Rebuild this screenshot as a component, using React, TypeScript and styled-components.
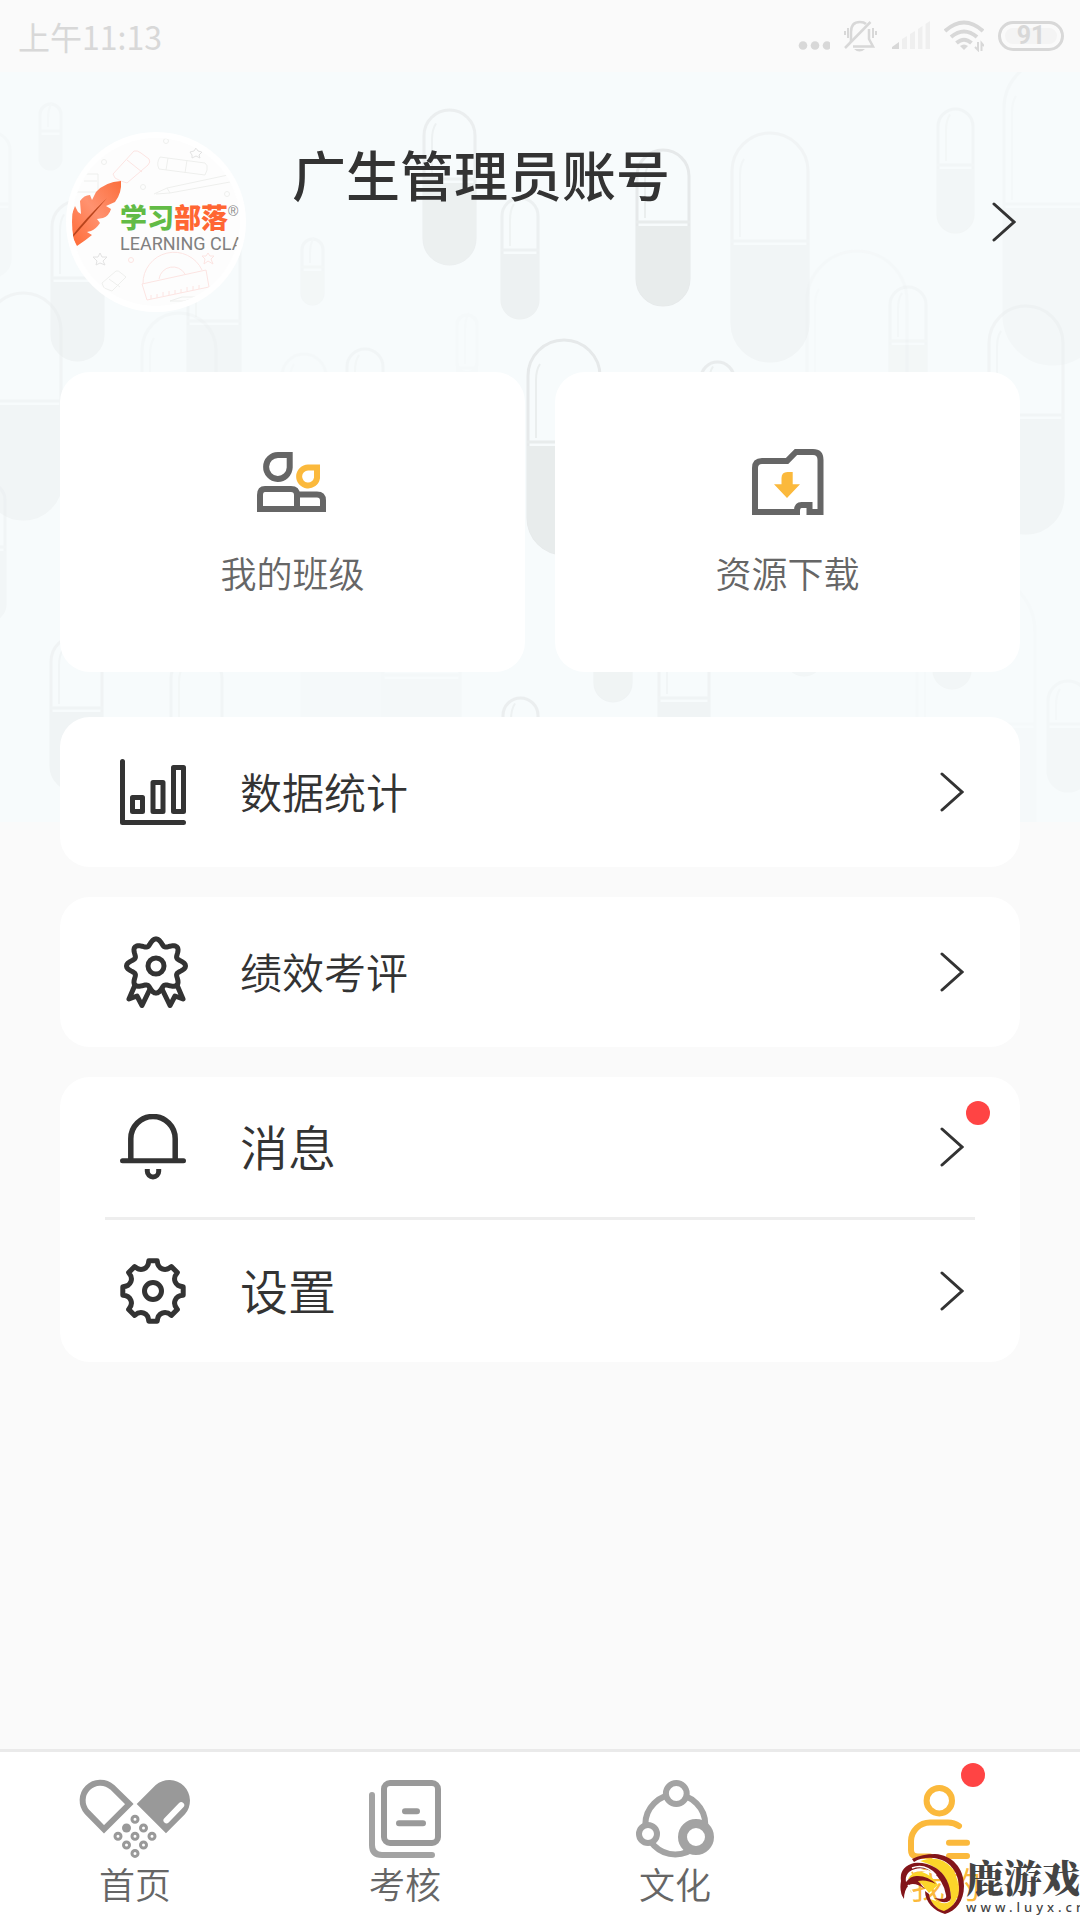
import React from "react";
import styled, { createGlobalStyle } from "styled-components";

const GlobalStyle = createGlobalStyle`
  * { box-sizing: border-box; }
  body {
    margin: 0;
    background: #fafafa;
    color: #333;
    font-family: "Noto Sans CJK SC", sans-serif;
    font-weight: 350;
  }
  button, a { font: inherit; color: inherit; text-decoration: none; }
`;

const Screen = styled.div`
  position: relative;
  display: flex;
  flex-direction: column;
  min-height: 100vh;
  overflow: hidden;
`;

const StatusBar = styled.header`
  display: flex;
  align-items: center;
  justify-content: space-between;
  height: 72px;
  padding: 0 16px 0 18px;
  color: #d8d8d8;
`;

const Clock = styled.time`
  font-size: 32px;
  font-weight: 400;
  line-height: 72px;
`;

const StatusIcons = styled.div`
  display: flex;
  align-items: center;
  gap: 14px;
`;

const Battery = styled.span`
  display: flex;
  align-items: center;
  justify-content: center;
  width: 66px;
  height: 30px;
  border: 3px solid #d8d8d8;
  border-radius: 15px;
  background: #f4f4f4;
  box-shadow: inset 0 0 0 4px #fafafa;
  font-family: Roboto, sans-serif;
  font-size: 25px;
  font-weight: 700;
  line-height: 24px;
`;

const Main = styled.main`
  position: relative;
  flex: 1;
`;

const Backdrop = styled.svg`
  position: absolute;
  top: 0;
  left: 0;
  z-index: -1;
  display: block;
  width: 100%;
  height: auto;
`;

const Profile = styled.a`
  display: flex;
  align-items: center;
  padding: 60px 64px 60px 66px;
`;

const Avatar = styled.span`
  position: relative;
  flex: none;
  display: flex;
  flex-direction: column;
  width: 180px;
  height: 180px;
  padding: 66px 0 0 48px;
  border: 6px solid #fff;
  border-radius: 50%;
  background: #fdfdfd;
  overflow: hidden;
  white-space: nowrap;
`;

const AvatarArt = styled.svg`
  position: absolute;
  top: 0;
  left: 0;
`;

const Brand = styled.span<{ $color: string }>`
  color: ${(p) => p.$color};
`;

const BrandRow = styled.span`
  position: relative;
  display: flex;
  font-size: 27px;
  font-weight: 900;
  line-height: 26px;
`;

const Registered = styled.span`
  color: #888;
  font-family: "Liberation Sans", sans-serif;
  font-size: 14px;
  font-weight: 400;
  line-height: 14px;
`;

const BrandLatin = styled.span`
  position: relative;
  color: #808080;
  font-family: Roboto, sans-serif;
  font-size: 18px;
  font-weight: 400;
  line-height: 28px;
`;

const Name = styled.h1`
  flex: 1;
  align-self: flex-start;
  margin: 0 0 0 46px;
  font-size: 54px;
  font-weight: 500;
  line-height: 84px;
`;

const Content = styled.div`
  display: flex;
  flex-direction: column;
  gap: 30px;
  padding: 0 60px 60px;
`;

const Tiles = styled.div`
  display: grid;
  grid-template-columns: 1fr 1fr;
  gap: 30px;
  margin-bottom: 15px;
`;

const Tile = styled.button`
  display: flex;
  flex-direction: column;
  align-items: center;
  gap: 32px;
  padding: 77px 0 75px;
  border: 0;
  border-radius: 30px;
  background: #fff;
  color: #666;
  font-size: 36px;
  line-height: 50px;
`;

const Panel = styled.section`
  border-radius: 30px;
  background: #fff;
`;

const Row = styled.button<{ $height: number; $size: number }>`
  position: relative;
  display: flex;
  align-items: center;
  gap: 54px;
  width: 100%;
  height: ${(p) => p.$height}px;
  padding: 0 56px 0 60px;
  border: 0;
  background: none;
  font-size: ${(p) => p.$size}px;
  text-align: left;
`;

const RowLabel = styled.span`
  flex: 1;
  padding-bottom: 4px;
`;

const Divider = styled.hr`
  height: 3px;
  margin: 0 45px;
  border: 0;
  background: #eee;
`;

const Dot = styled.span<{ $top: number; $right: string }>`
  position: absolute;
  top: ${(p) => p.$top}px;
  right: ${(p) => p.$right};
  width: 24px;
  height: 24px;
  border-radius: 50%;
  background: #ff4444;
`;

const TabBar = styled.nav`
  display: grid;
  grid-template-columns: repeat(4, 1fr);
  border-top: 3px solid #eaeaea;
  background: #fff;
`;

const Tab = styled.a<{ $active?: boolean }>`
  position: relative;
  display: flex;
  flex-direction: column;
  align-items: center;
  padding: 27px 0 13px;
  color: ${(p) => (p.$active ? "#fbb93c" : "#666")};
  font-size: 36px;
  line-height: 48px;
`;

const Watermark = styled.aside`
  position: absolute;
  right: 0;
  bottom: 4px;
  display: flex;
  align-items: flex-start;
  width: 180px;
  white-space: nowrap;

  svg { flex: none; }
`;

const WatermarkText = styled.div`
  display: flex;
  flex-direction: column;
  color: #444;
`;

const WatermarkName = styled.span`
  font-family: "Noto Serif CJK SC", "Noto Sans CJK SC", serif;
  font-size: 38px;
  font-weight: 900;
  line-height: 44px;
`;

const WatermarkUrl = styled.span`
  font-family: "Noto Sans", sans-serif;
  font-size: 13px;
  font-weight: 500;
  letter-spacing: 4px;
  line-height: 18px;
`;

/* x, y, width, height, seam, opacity */
type PillSpec = [number, number, number, number, number, number];

const pills: PillSpec[] = [
  [39, 31, 23, 67, 63, 0.2],
  [-25, 60, 36, 145, 136, 0.15],
  [423, 37, 53, 156, 111, 0.7],
  [501, 125, 38, 122, 182, 0.6],
  [636, 77, 54, 157, 154, 1],
  [731, 60, 78, 230, 173, 0.35],
  [937, 36, 37, 125, 97, 0.3],
  [1003, -14, 100, 307, 136, 0.2],
  [806, 178, 102, 320, 340, 0.12],
  [889, 214, 38, 140, 273, 0.25],
  [988, 233, 76, 229, 347, 0.35],
  [301, 166, 23, 67, 199, 0.25],
  [456, 242, 22, 60, 300, 0.1],
  [51, 128, 53, 161, 210, 0.4],
  [187, 140, 54, 200, 253, 0.3],
  [-15, 220, 77, 228, 333, 0.35],
  [141, 240, 76, 200, 355, 0.2],
  [527, 267, 74, 216, 374, 1],
  [700, 289, 35, 110, 350, 0.8],
  [346, 276, 38, 120, 340, 0.3],
  [281, 281, 46, 130, 350, 0.12],
  [-30, 410, 36, 140, 479, 0.3],
  [50, 563, 53, 157, 640, 0.4],
  [170, 580, 53, 150, 680, 0.3],
  [382, 520, 79, 230, 607, 0.15],
  [301, 540, 80, 220, 600, 0.08],
  [594, 508, 38, 122, 565, 0.45],
  [658, 555, 52, 157, 630, 0.4],
  [502, 625, 37, 120, 690, 0.7],
  [933, 500, 38, 117, 560, 0.3],
  [785, 490, 38, 114, 550, 0.3],
  [1047, 608, 42, 112, 656, 0.2],
  [916, 500, 120, 320, 656, 0.1],
];

const Pill = ({ spec }: { spec: PillSpec }) => {
  const [x, y, w, h, seam, opacity] = spec;
  const r = w / 2;
  return (
    <g opacity={opacity}>
      <rect x={x + 1} y={y + 1} width={w - 2} height={h - 2} rx={r - 1} fill="none" stroke="#e6e9ea" strokeWidth="3" />
      <path d={`M${x} ${seam}H${x + w}V${y + h - r}A${r} ${r} 0 0 1 ${x} ${y + h - r}Z`} fill="#e8ecec" />
      <path d={`M${x} ${seam - 4}H${x + w}`} stroke="#e8ecec" strokeWidth="3" />
      <path d={`M${x + 9} ${seam - 8}V${y + r + 4}Q${x + 9} ${y + r - 6} ${x + 13} ${y + r - 12}`} fill="none" stroke="#eaeeee" strokeWidth="2" />
    </g>
  );
};

const PillBackdrop = () => (
  <Backdrop viewBox="0 0 1080 750" aria-hidden="true">
    <rect width="1080" height="750" fill="#f7fbfc" />
    {pills.map((spec, i) => (
      <Pill key={i} spec={spec} />
    ))}
  </Backdrop>
);

const Chevron = () => (
  <svg width="24" height="40" viewBox="0 0 24 40" fill="none" stroke="#333" strokeWidth="3" strokeLinecap="round" aria-hidden="true">
    <path d="M2 2L22 20L2 38" />
  </svg>
);

const polar = (r: number, deg: number, cx: number, cy: number, squash = 1) => {
  const a = (deg * Math.PI) / 180;
  return `${(cx + r * Math.sin(a)).toFixed(2)} ${(cy - r * squash * Math.cos(a)).toFixed(2)}`;
};

const gearPath =
  "M" +
  [0, 45, 90, 135, 180, 225, 270, 315]
    .map(
      (a) =>
        `${polar(30.5, a - 8, 33, 33)}L${polar(30.5, a + 8, 33, 33)}C${polar(22.5, a + 12, 33, 33)} ${polar(22.5, a + 33, 33, 33)} `
    )
    .join("") +
  `${polar(30.5, -8, 33, 33)}Z`;

const rosettePath =
  "M" +
  Array.from({ length: 120 }, (_, i) => polar(26 + 3.5 * Math.cos((i * 24 * Math.PI) / 180), i * 3, 36, 30, 0.92)).join("L") +
  "Z";

const ChartIcon = () => (
  <svg width="66" height="66" viewBox="0 0 66 66" fill="none" stroke="#333" strokeWidth="5" strokeLinejoin="round" strokeLinecap="round" aria-hidden="true">
    <path d="M2.5 2.5V63.5H63.5" />
    <rect x="12.5" y="38.5" width="10" height="14" />
    <rect x="33" y="23.5" width="10" height="29" />
    <rect x="53.5" y="8.5" width="10" height="44" />
  </svg>
);

const MedalIcon = () => (
  <svg width="66" height="72" viewBox="0 0 66 72" overflow="visible" fill="none" stroke="#333" strokeWidth="5" strokeLinejoin="round" strokeLinecap="round" aria-hidden="true">
    <path d={rosettePath} />
    <circle cx="36" cy="30" r="8" />
    <path d="M15 49L9 63L17 60L22 69.500L30 53M57 49L63 63L55 60L50 69.500L42 53" />
  </svg>
);

const BellIcon = () => (
  <svg width="66" height="66" viewBox="0 0 66 66" fill="none" stroke="#333" strokeWidth="5" aria-hidden="true">
    <path d="M10.800 46V24.700A22.200 22.200 0 0 1 55.200 24.700V46" strokeWidth="5.500" />
    <path d="M2.500 46.700H63.500" strokeLinecap="round" />
    <path d="M27.300 55V57.300A5.700 5.700 0 0 0 38.700 57.300V55" />
  </svg>
);

const GearIcon = () => (
  <svg width="66" height="66" viewBox="0 0 66 66" fill="none" stroke="#333" strokeWidth="5" strokeLinejoin="round" aria-hidden="true">
    <path d={gearPath} />
    <circle cx="33" cy="33" r="8.500" />
  </svg>
);

const ClassIcon = () => (
  <svg width="72" height="66" viewBox="0 0 72 66" fill="none" stroke="#666" strokeWidth="6" aria-hidden="true">
    <path d="M32.700 6V18.500A11.800 12 0 1 1 21 6Z" />
    <path d="M60 18.500V29A9 9 0 1 1 51 18.500Z" stroke="#fbb93c" />
    <path d="M3 60V46Q3 40 8 40H34Q40 40 40 46V60Z" />
    <path d="M40 45.500H60Q66 45.500 66 51.500V60H40" />
  </svg>
);

const DownloadIcon = () => (
  <svg width="72" height="66" viewBox="0 0 72 66" fill="none" stroke="#666" strokeWidth="6" aria-hidden="true">
    <path d="M48 63H3V19Q3 12 10 12H35L44 3H61Q68.500 3 68.500 11V63H57.500V56H49.500Q45 56 45 62" />
    <path d="M29.500 35.300V29Q29.500 23 35.500 23H40.700V35.300H48L35 49L22 35.300Z" fill="#fbb93c" stroke="none" />
  </svg>
);

const HomeIcon = () => (
  <svg width="114" height="80" viewBox="0 0 114 80" fill="none" stroke="#999" aria-hidden="true">
    <path d="M51.300 25L34.200 8.200A17.700 17.700 0 0 0 9.200 33.200L26 50.300Z" strokeWidth="6" />
    <path d="M58.700 25L77.700 6.100A20.700 20.700 0 0 1 106.900 35.300L88 54.300Z" fill="#999" stroke="none" />
    <path d="M88.500 41.300L103.200 26.200" stroke="#fff" strokeWidth="6" strokeLinecap="round" />
    {[[57, 40.3], [65.5, 49], [40, 57.3], [57, 57.3], [74, 57.3], [48.5, 66], [65.5, 66], [57, 74.4]].map(([x, y]) => (
      <circle key={`${x}-${y}`} cx={x} cy={y} r="3" strokeWidth="3" />
    ))}
    <circle cx="48.500" cy="49" r="4.500" fill="#999" stroke="none" />
  </svg>
);

const ExamIcon = () => (
  <svg width="114" height="80" viewBox="0 0 114 80" fill="none" stroke="#999" strokeWidth="6" strokeLinecap="round" aria-hidden="true">
    <rect x="36" y="4" width="54" height="60" rx="6" />
    <path d="M24 16V66Q24 76 34 76H84" stroke="#a3a3a3" />
    <path d="M57 32.300H69M51 44.300H75" />
  </svg>
);

const CultureIcon = () => (
  <svg width="114" height="80" viewBox="0 0 114 80" stroke="#a3a3a3" strokeWidth="6" fill="#fff" aria-hidden="true">
    <circle cx="57.300" cy="45.500" r="30" />
    <circle cx="58.300" cy="14.500" r="10.400" />
    <circle cx="30" cy="55" r="9" />
    <circle cx="78" cy="58" r="13.500" strokeWidth="9" />
  </svg>
);

const MeIcon = () => (
  <svg width="114" height="80" viewBox="0 0 114 80" fill="none" stroke="#fbb93c" strokeWidth="6" strokeLinecap="round" aria-hidden="true">
    <circle cx="51.300" cy="21.700" r="12.700" />
    <path d="M71 47Q66 43.500 60 43.500H42A19 19 0 0 0 23 62V71Q23 77.500 30 77.500H42" />
    <path d="M61 63.700H79M61 77H79" />
  </svg>
);

const MoreIcon = () => (
  <svg width="34" height="32" viewBox="0 0 34 32" fill="#d8d8d8" aria-hidden="true">
    <circle cx="7" cy="25.500" r="4.300" />
    <circle cx="19" cy="25.500" r="4.300" />
    <circle cx="31" cy="25.500" r="4.300" />
  </svg>
);

const SilentIcon = () => (
  <svg width="34" height="32" viewBox="0 0 34 32" fill="none" stroke="#d8d8d8" strokeWidth="2.500" aria-hidden="true">
    <path d="M7 22V12Q7 2 16 2Q20 2 22 4M25 9V19L29 26.500H9" />
    <path d="M1 28L26.500 2" />
    <path d="M10 29H21Q15.500 34 10 29Z" fill="#d8d8d8" stroke="none" />
    <path d="M1 11V15M4 8V18M29 8V18M32 11V15" strokeWidth="2" />
  </svg>
);

const SignalIcon = () => (
  <svg width="38" height="32" viewBox="0 0 38 32" fill="#efefef" aria-hidden="true">
    <path d="M0 29V27L7 22V29Z" fill="#d8d8d8" />
    <path d="M10 29V19L15 16V29ZM18 29V14L23 11V29ZM26 29V9L30.500 6V29ZM33.500 29V4L38 1V29Z" />
  </svg>
);

const WifiIcon = () => (
  <svg width="40" height="32" viewBox="0 0 40 32" fill="none" stroke="#d8d8d8" strokeWidth="4" aria-hidden="true">
    <path d="M1 11Q20 -6 39 11M7 17Q20 6 33 17M12.500 23Q20 16.500 27.500 23" />
    <path d="M16 26Q20 23 24 26L20 30Z" fill="#d8d8d8" stroke="none" />
    <path d="M34 22V30L31 27M37.500 31V23L40 26" strokeWidth="2" />
  </svg>
);

const AvatarDrawing = () => (
  <AvatarArt width="168" height="168" viewBox="0 0 168 168" fill="none" strokeWidth="1" aria-hidden="true">
    <defs>
      <linearGradient id="feather" x1="1" y1="0" x2="0" y2="1">
        <stop offset="0" stopColor="#fb6e3c" />
        <stop offset="0.500" stopColor="#ff9270" />
        <stop offset="1" stopColor="#ff6a35" />
      </linearGradient>
    </defs>
    <g stroke="#fce4e2">
      <path d="M41 36L62 13Q65 12 69 15L77 21Q79 24 76 27L55 45Q50 44 43 40ZM55 22L70 34" />
      <path d="M70 146L134 132L137 149L75 162ZM71 146A31 31 0 0 1 130 132M87 141A14 14 0 0 1 113 136" />
      <path d="M79 157V161M85 156V160M91 154V158M97 153V157M103 152V156M109 151V155M115 149V153M121 148V152M127 147V151" />
      <path d="M136 115L138 118L142 118L139 121L141 126L136 123L132 126L133 121L130 118L134 118Z" />
      <circle cx="59" cy="122" r="2.500" />
    </g>
    <g stroke="#eeefed">
      <path d="M88 19L133 25Q136 27 135 32L133 37L87 31Q84 25 88 19ZM96 20L94 32M115 22L113 35" />
      <path d="M82 56L95 50L156 37M84 56L98 55L158 44M95 50L98 55" />
      <path d="M5 36H26V54H2M12 43H25" />
      <path d="M30 145L44 133Q46 132 49 135L54 139L40 153L32 150ZM37 141L48 149" />
      <path d="M98 163L110 159H128L112 163Z" />
      <path d="M124 10L126 13L130 14L127 17L128 20L124 18L120 20L120 17L118 14L122 13Z" stroke="#e2e2e2" />
      <path d="M28 115L30 119L35 119L31 123L33 127L28 125L24 127L25 123L21 119L26 119Z" stroke="#e2e2e2" />
      <circle cx="32" cy="24" r="2.500" />
      <circle cx="94" cy="3" r="2.500" />
      <circle cx="71" cy="49" r="2.500" />
      <circle cx="155" cy="56" r="2.500" />
    </g>
    <path
      d="M49 43Q50 55 43 64L34 68L39 71Q37 78 31 80L25 81L28 85Q24 91 19 93L15 94L20 97Q14 102 5 108L0 98V76L3 68L6 74L9 76L8 63Q12 57 18 57L20 62L24 54Q33 44 49 43Z"
      fill="url(#feather)"
    />
    <path d="M0 98Q14 80 35 60Q17 81 1 99Z" fill="#b8441c" />
  </AvatarArt>
);

const DeerLogo = () => (
  <svg width="66" height="62" viewBox="0 0 66 62" aria-hidden="true">
    <path d="M20 7Q40 0 52 14Q60 26 58 41Q54 54 44 58Q34 54 30 45L42 49Q51 50 51 44Q50 24 36 14Q28 9 20 7Z" fill="#fcd52a" />
    <path d="M8 25Q12 17 22 18Q32 21 38 31L29 39L20 28Q14 23 8 25Z" fill="#fcd52a" />
    <path d="M12 5Q22 0 35 0C52 1 64 14 64 32C64 47 56 57 45 60C34 57 25 48 25 37L29 40C30 48 36 55 44 57C54 53 60 44 59 32C58 17 49 6 34 4Q22 3 14 8Z" fill="#82151a" />
    <path d="M14 9Q26 8 36 14Q50 23 51 44Q50 49 42 48L34 44L42 45Q47 45 46 41Q43 25 31 17Q19 11 9 18Q5 22 6 28Q11 21 18 22Q28 22 36 30Q26 25 18 27L25 35Q15 28 9 31Q4 36 4 45Q-1 38 1 27Q-1 13 14 9Z" fill="#82151a" />
    <path d="M12 14Q25 9 36 21Q25 14 13 18M8 31L13 39" fill="none" stroke="#fff" strokeWidth="1.500" />
  </svg>
);

export default function App() {
  return (
    <>
      <GlobalStyle />
      <Screen>
        <StatusBar>
          <Clock>上午11:13</Clock>
          <StatusIcons>
            <MoreIcon />
            <SilentIcon />
            <SignalIcon />
            <WifiIcon />
            <Battery>91</Battery>
          </StatusIcons>
        </StatusBar>

        <Main>
          <PillBackdrop />
          <Profile href="#profile">
            <Avatar>
              <AvatarDrawing />
              <BrandRow>
                <Brand $color="#62bb46">学习</Brand>
                <Brand $color="#ff6633">部落</Brand>
                <Registered>®</Registered>
              </BrandRow>
              <BrandLatin>LEARNING CLA</BrandLatin>
            </Avatar>
            <Name>广生管理员账号</Name>
            <Chevron />
          </Profile>

          <Content>
            <Tiles>
              <Tile type="button">
                <ClassIcon />
                我的班级
              </Tile>
              <Tile type="button">
                <DownloadIcon />
                资源下载
              </Tile>
            </Tiles>

            <Panel>
              <Row type="button" $height={150} $size={42}>
                <ChartIcon />
                <RowLabel>数据统计</RowLabel>
                <Chevron />
              </Row>
            </Panel>

            <Panel>
              <Row type="button" $height={150} $size={42}>
                <MedalIcon />
                <RowLabel>绩效考评</RowLabel>
                <Chevron />
              </Row>
            </Panel>

            <Panel>
              <Row type="button" $height={140} $size={48}>
                <BellIcon />
                <RowLabel>消息</RowLabel>
                <Chevron />
                <Dot $top={24} $right="30px" />
              </Row>
              <Divider />
              <Row type="button" $height={142} $size={48}>
                <GearIcon />
                <RowLabel>设置</RowLabel>
                <Chevron />
              </Row>
            </Panel>
          </Content>
        </Main>

        <TabBar>
          <Tab href="#home">
            <HomeIcon />
            首页
          </Tab>
          <Tab href="#exam">
            <ExamIcon />
            考核
          </Tab>
          <Tab href="#culture">
            <CultureIcon />
            文化
          </Tab>
          <Tab href="#me" $active>
            <MeIcon />
            我的
            <Dot $top={11} $right="calc(50% - 40px)" />
          </Tab>
        </TabBar>

        <Watermark>
          <DeerLogo />
          <WatermarkText>
            <WatermarkName>鹿游戏</WatermarkName>
            <WatermarkUrl>www.luyx.cn</WatermarkUrl>
          </WatermarkText>
        </Watermark>
      </Screen>
    </>
  );
}
